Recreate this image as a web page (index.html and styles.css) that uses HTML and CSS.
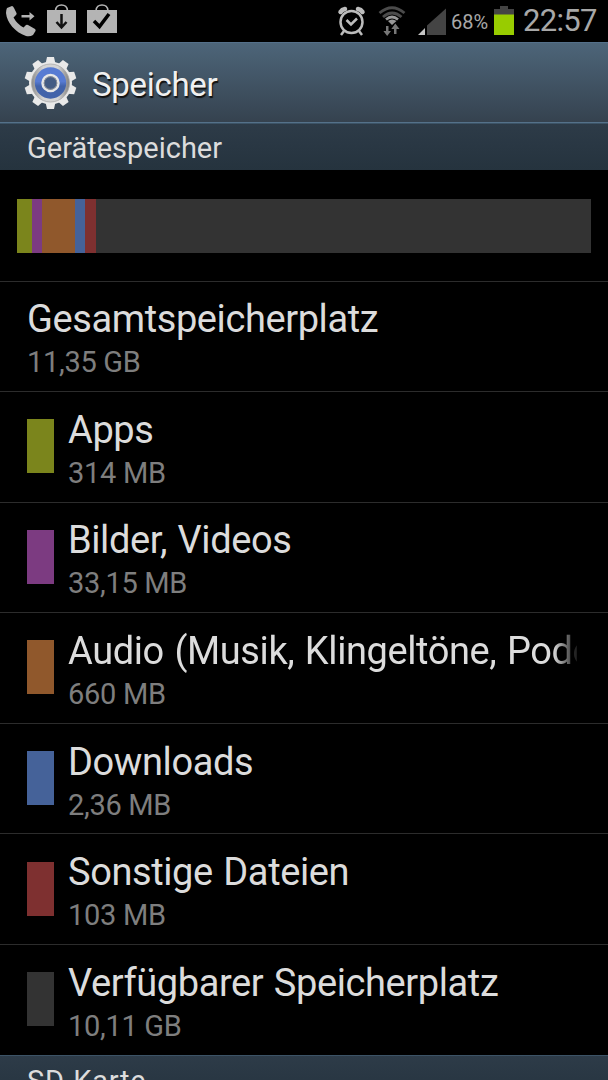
FILE: index.html
```html
<!DOCTYPE html>
<html lang="de">

<head>
	<meta charset="utf-8">
	<meta name="viewport" content="width=device-width, initial-scale=1.0">
	<title>Speicher</title>
	<link rel="stylesheet" href="styles.css">
</head>

<body>
	<div class="screen">
		<!-- status bar -->
		<div class="statusbar">
			<svg class="notifications" width="130" height="42" viewBox="0 0 130 42">
				<path fill="#b4b4b4" d="M7 8 L12 6 Q13 6 14 8 L16.500 13 Q17 14 16 15 L13.500 17.500 Q17 24 23.500 27.500 L26 25 Q27 24.500 28 25 L35 29 Q36 30 35.500 31 L33 35 Q30 37 26 36 C15 32 7 23 6 13 Q6 10 7 8 Z" />
				<path fill="#b4b4b4" d="M21.500 15 h8 v-3 l5 4.200 l-5 4.200 v-3 h-8 Z" />
				<path fill="none" stroke="#b4b4b4" stroke-width="1.700" d="M55.500 11 C55.500 3 67.500 3 67.500 11 M96 11 C96 3 108 3 108 11" />
				<path fill="#b4b4b4" d="M47 10 H76 V33 H47 Z M87 10 H117 V33 H87 Z" />
				<path fill="none" stroke="#111" stroke-width="2.500" d="M61.500 14 V27 M56.500 22 L61.500 27.500 L66.500 22" />
				<path fill="none" stroke="#000" stroke-width="3.500" d="M94 21 L99.500 26.500 L109 14" />
			</svg>
			<div class="system">
				<svg width="112" height="42" viewBox="336 0 112 42">
					<!-- alarm clock -->
					<g fill="none" stroke="#bcbcbc">
						<circle cx="351.500" cy="22" r="11" stroke-width="2.500" />
						<path stroke-width="2.500" d="M346.500 20 L351 24.500 L357 18.500 M344 31 L341 35 M359 31 L362 35" />
						<path stroke-width="4.500" stroke-linecap="round" d="M340.500 12 Q342 9.500 345 9 M358 9 Q361 9.500 362.500 12" />
					</g>
					<!-- wifi -->
					<g fill="none" stroke-width="2.800">
						<path stroke="#4b4b4b" d="M379.500 13 Q392 2.500 404.500 13 M383 17 Q392 9 401.500 17" />
						<path stroke="#999" d="M386 19.500 Q392 14.500 398 19.500" />
					</g>
					<path fill="#999" d="M388 21 Q392 18 396.500 21 L392 25 Z" />
					<path fill="#777" d="M386 26 h2.500 v5 h2.500 l-3.800 5 l-3.800 -5 h2.600 Z M394 34 h2.500 v-5 h3 l-4.200 -5.500 l-4 5.500 h2.700 Z" />
					<!-- signal -->
					<path fill="#444" d="M427 25.500 L446 8.500 V35 H427 Z" />
					<path fill="#c4c4c4" d="M418 35 L425 28 V35 Z" />
				</svg>
				<span class="percent">68%</span>
				<svg width="20" height="42" viewBox="0 0 20 42">
					<path fill="#444" d="M6 6 H14 V9 H20 V15 H0 V9 H6 Z" />
					<path fill="#98cc00" d="M0 14.500 H20 V35 H0 Z" />
				</svg>
				<span class="clock">22:57</span>
			</div>
		</div>

		<!-- title -->
		<div class="titlebar">
			<svg width="53" height="54" viewBox="-26.500 -27 53 54">
				<defs>
					<linearGradient id="ring" x1="0" y1="0" x2="1" y2="0">
						<stop offset="0" stop-color="#8c8c8c" />
						<stop offset=".3" stop-color="#d4d4d4" />
						<stop offset=".7" stop-color="#d4d4d4" />
						<stop offset="1" stop-color="#808080" />
					</linearGradient>
					<linearGradient id="blue" x1="0" y1="0" x2="0" y2="1">
						<stop offset=".45" stop-color="#577bd3" />
						<stop offset=".6" stop-color="#4263aa" />
					</linearGradient>
					<path id="tooth" d="M-5 -19 L-3.500 -26 H3.500 L5 -19 Z" />
				</defs>
				<g fill="#e9e9e9">
					<use href="#tooth" />
					<use href="#tooth" transform="rotate(36)" />
					<use href="#tooth" transform="rotate(72)" />
					<use href="#tooth" transform="rotate(108)" />
					<use href="#tooth" transform="rotate(144)" />
					<use href="#tooth" transform="rotate(180)" />
					<use href="#tooth" transform="rotate(216)" />
					<use href="#tooth" transform="rotate(252)" />
					<use href="#tooth" transform="rotate(288)" />
					<use href="#tooth" transform="rotate(324)" />
					<circle r="21.500" />
				</g>
				<circle r="19" fill="url(#ring)" stroke="#aaa" stroke-width=".8" />
				<circle r="15.700" fill="url(#blue)" />
				<circle r="8" fill="#465d86" stroke="#e6e6e6" stroke-width="2.500" />
				<circle r="6.300" fill="#445c84" stroke="#999" stroke-width=".8" />
			</svg>
			<h1>Speicher</h1>
		</div>

		<h2 class="section">Gerätespeicher</h2>

		<!-- usage bar -->
		<div class="usage">
			<div class="bar">
				<div class="apps" style="width: 15px"></div>
				<div class="pictures" style="width: 10px"></div>
				<div class="audio" style="width: 33.300px"></div>
				<div class="downloads" style="width: 10px"></div>
				<div class="other" style="width: 10.500px"></div>
			</div>
		</div>

		<!-- storage list -->
		<div class="row">
			<div class="text">
				<div class="name">Gesamtspeicherplatz</div>
				<div class="size">11,35 GB</div>
			</div>
		</div>
		<div class="row">
			<div class="swatch apps"></div>
			<div class="text">
				<div class="name">Apps</div>
				<div class="size">314 MB</div>
			</div>
		</div>
		<div class="row">
			<div class="swatch pictures"></div>
			<div class="text">
				<div class="name">Bilder, Videos</div>
				<div class="size">33,15 MB</div>
			</div>
		</div>
		<div class="row">
			<div class="swatch audio"></div>
			<div class="text">
				<div class="name fade">Audio (Musik, Klingeltöne, Podcasts)</div>
				<div class="size">660 MB</div>
			</div>
		</div>
		<div class="row">
			<div class="swatch downloads"></div>
			<div class="text">
				<div class="name">Downloads</div>
				<div class="size">2,36 MB</div>
			</div>
		</div>
		<div class="row">
			<div class="swatch other"></div>
			<div class="text">
				<div class="name">Sonstige Dateien</div>
				<div class="size">103 MB</div>
			</div>
		</div>
		<div class="row">
			<div class="swatch free"></div>
			<div class="text">
				<div class="name">Verfügbarer Speicherplatz</div>
				<div class="size">10,11 GB</div>
			</div>
		</div>

		<h2 class="section sdcard">SD-Karte</h2>
	</div>
</body>

</html>
```
FILE: styles.css
```css
body {
	margin: 0;
	background-color: #000;
	font-family: Roboto, sans-serif;
	color: #dcdcdc;
}

.screen {
	width: 608px;
	height: 1080px;
	overflow: hidden;
}

svg {
	display: block;
	flex: none;
}

/* status bar */
.statusbar {
	display: flex;
	justify-content: space-between;
	height: 42px;
	line-height: 42px;
}

.system {
	display: flex;
	padding-right: 11px;
	color: #a8a8a8;
}

.percent {
	width: 43px;
	margin-left: 3px;
	font-size: 20px;
	line-height: 44px;
}

.clock {
	width: 74px;
	margin-left: 9px;
	font-size: 31px;
	letter-spacing: -0.7px;
	white-space: nowrap;
}

/* title */
.titlebar {
	display: flex;
	align-items: center;
	box-sizing: border-box;
	height: 81px;
	padding-left: 24px;
	border-top: 1px solid #54708a;
	border-bottom: 1px solid #54718a;
	background: linear-gradient(#4d6579, #35424f);
}

h1 {
	margin: 3px 0 0 15px;
	font-size: 33px;
	font-weight: normal;
	letter-spacing: -0.3px;
	color: #f0f0f0;
	text-shadow: 1px 2px 1px #111;
}

.section {
	box-sizing: border-box;
	height: 47px;
	margin: 0;
	padding-left: 27px;
	border-top: 1px solid #3c5366;
	background: linear-gradient(#2d3b48, #25333e);
	font-size: 29px;
	font-weight: normal;
	line-height: 48px;
}

.section.sdcard {
	letter-spacing: 0.7px;
	line-height: 50px;
}

/* usage bar */
.usage {
	height: 110.5px;
	padding: 29px 17px 0;
	box-sizing: border-box;
}

.bar {
	display: flex;
	height: 54px;
	background-color: #333;
}

/* storage list */
.row {
	display: flex;
	align-items: center;
	box-sizing: border-box;
	height: 110.6px;
	padding: 0 31px 0 27px;
	border-top: 1px solid #2c2c2c;
}

.swatch {
	flex: none;
	width: 27px;
	height: 54px;
	margin: 0 14px 1.500px 0;
}

.text {
	flex: 1;
	min-width: 0;
	padding-top: 4px;
}

.name {
	overflow: hidden;
	font-size: 38px;
	letter-spacing: -0.4px;
	word-spacing: 1.500px;
	line-height: 48px;
	white-space: nowrap;
}

/* long names fade out at the right edge */
.name.fade {
	-webkit-mask-image: linear-gradient(to right, #000 485px, transparent 512px);
	mask-image: linear-gradient(to right, #000 485px, transparent 512px);
}

.size {
	font-size: 29px;
	letter-spacing: -0.3px;
	line-height: 38px;
	color: #7e7e7e;
}

/* colours */
.apps {
	background-color: #7b851c;
}

.pictures {
	background-color: #7c3b81;
}

.audio {
	background-color: #90582c;
}

.downloads {
	background-color: #456299;
}

.other {
	background-color: #7e3030;
}

.free {
	background-color: #333;
}
```
